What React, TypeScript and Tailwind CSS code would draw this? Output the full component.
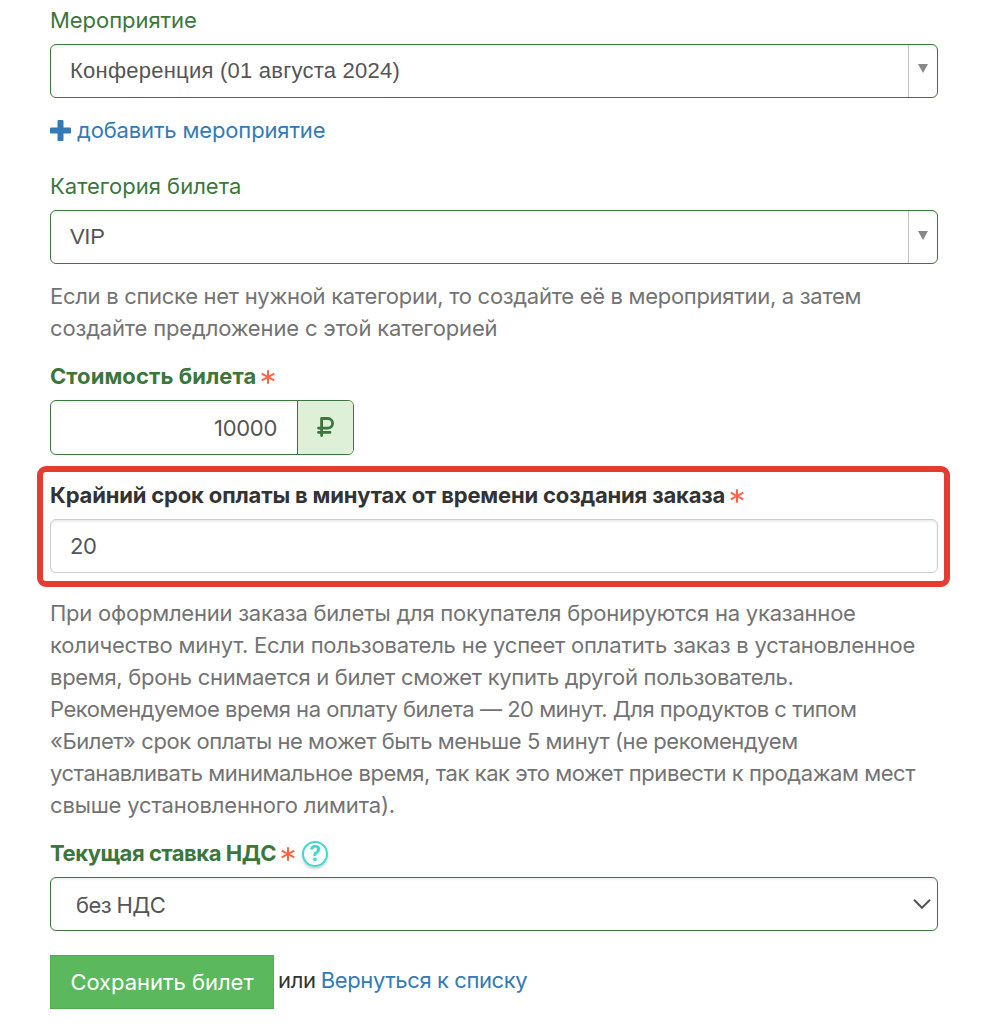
import type { ReactNode } from "react";

type Line = { text: string; className: string };

const CATEGORY_HELP: Line[] = [
  { text: "Если в списке нет нужной категории, то создайте её в мероприятии, а затем", className: "tracking-[-0.3px]" },
  { text: "создайте предложение с этой категорией", className: "tracking-[-0.16px]" },
];

const DEADLINE_HELP: Line[] = [
  { text: "При оформлении заказа билеты для покупателя бронируются на указанное", className: "tracking-[-0.23px]" },
  { text: "количество минут. Если пользователь не успеет оплатить заказ в установленное", className: "tracking-[-0.21px]" },
  { text: "время, бронь снимается и билет сможет купить другой пользователь.", className: "tracking-[-0.3px]" },
  { text: "Рекомендуемое время на оплату билета — 20 минут. Для продуктов с типом", className: "tracking-[-0.49px]" },
  { text: "«Билет» срок оплаты не может быть меньше 5 минут (не рекомендуем", className: "tracking-[-0.44px]" },
  { text: "устанавливать минимальное время, так как это может привести к продажам мест", className: "tracking-[-0.44px]" },
  { text: "свыше установленного лимита).", className: "tracking-[-0.17px]" },
];

function HelpText({ lines, className }: { lines: Line[]; className: string }) {
  return (
    <p className={`whitespace-nowrap text-[#737373] ${className}`}>
      {lines.map((line) => (
        <span key={line.text} className={`block ${line.className}`}>
          {line.text}
        </span>
      ))}
    </p>
  );
}

function Required({ className = "" }: { className?: string }) {
  return (
    <svg
      viewBox="0 0 14 14"
      aria-hidden="true"
      className={`h-3.5 w-3.5 shrink-0 fill-none stroke-[#ff6347] ${className}`}
      strokeWidth="2"
    >
      <path d="M7 0.3v13.4M0.7 3.7l12.6 6.6M13.3 3.7L0.7 10.3" />
    </svg>
  );
}

// Select2-style control: value on the left, arrow cell behind a divider.
function SearchSelect({ children, arrowClassName }: { children: ReactNode; arrowClassName: string }) {
  return (
    <button
      type="button"
      className="mt-2 flex h-[54px] w-full rounded-md border border-[#3c763d] bg-white text-left text-[#555] shadow-[inset_0_2px_2px_rgba(0,0,0,0.06)]"
    >
      <span className="flex h-full flex-1 items-center pl-[19px]">{children}</span>
      <span className={`flex h-full w-[29px] justify-center border-l border-[#c4c4c4] ${arrowClassName}`}>
        <svg viewBox="0 0 10 9" className="h-[9px] w-2.5 fill-[#888]" aria-hidden="true">
          <path d="M0 0h10L5 9z" />
        </svg>
      </span>
    </button>
  );
}

export default function App() {
  return (
    <form className="h-[1031px] w-[1004px] overflow-hidden bg-white pt-1 pr-[66px] pl-[50px] font-['Inter','Liberation_Sans',sans-serif] text-[22px] leading-8 text-[#333]">
      <label className="block h-8 tracking-[-0.05px] text-[#3c763d]">Мероприятие</label>
      <SearchSelect arrowClassName="pt-[19px]">
        <span className="font-['Liberation_Sans',Arial,sans-serif] tracking-[0.24px]">
          Конференция (01 августа 2024)
        </span>
      </SearchSelect>
      <a href="#" className="mt-4 flex h-8 items-center text-[#337ab7]">
        <svg viewBox="0 0 21 21" className="mr-1.5 h-[21px] w-[21px] fill-[#337ab7]" aria-hidden="true">
          <path d="M8.5 0h4a1 1 0 0 1 1 1v6.5H20a1 1 0 0 1 1 1v4a1 1 0 0 1-1 1h-6.500V20a1 1 0 0 1-1 1h-4a1 1 0 0 1-1-1v-6.500H1a1 1 0 0 1-1-1V8.500a1 1 0 0 1 1-1h6.500V1a1 1 0 0 1 1-1z" />
        </svg>
        <span className="tracking-[-0.15px]">добавить мероприятие</span>
      </a>

      <label className="mt-6 block h-8 text-[#3c763d]">Категория билета</label>
      <SearchSelect arrowClassName="pt-5">
        <span className="font-['Liberation_Sans',Arial,sans-serif] tracking-[-0.3px]">VIP</span>
      </SearchSelect>
      <HelpText lines={CATEGORY_HELP} className="mt-4" />

      <label className="mt-4 flex h-8 items-center font-bold text-[#3c763d]">
        <span className="tracking-[0.07px]">Стоимость билета</span>
        <Required className="mt-0.5 ml-[5px]" />
      </label>
      <div className="mt-2 flex h-[55px] w-[304px] overflow-hidden rounded-md border border-[#3c763d]">
        <input
          defaultValue="10000"
          className="w-[246px] pr-5 text-right tracking-[-0.3px] text-[#555] shadow-[inset_0_2px_2px_rgba(0,0,0,0.06)] outline-none"
        />
        <span className="flex flex-1 items-center justify-center border-l border-[#3c763d] bg-[#dff0d8]">
          <svg
            viewBox="0 0 17 20"
            className="mb-0.5 h-5 w-[17px] fill-none stroke-[#3c763d]"
            strokeWidth="2.8"
            strokeLinecap="round"
            strokeLinejoin="round"
            aria-hidden="true"
          >
            <path d="M4.600 18.500V1.500h6.200a4.700 4.700 0 0 1 0 9.600H1.500M1.500 15.400h11.500" />
          </svg>
        </span>
      </div>

      <section className="-mx-[13px] mt-[11px] h-[121px] w-[913px] rounded-[9px] border-6 border-[#e63b30] px-[7px] pt-[7px]">
        <label className="flex h-8 items-center font-bold">
          <span className="whitespace-nowrap tracking-[-0.17px]">
            Крайний срок оплаты в минутах от времени создания заказа
          </span>
          <Required className="mt-0.5 ml-[5px]" />
        </label>
        <input
          defaultValue="20"
          className="mt-2 block h-[54px] w-[888px] rounded-md border border-[#ccc] px-[19px] tracking-[-0.3px] text-[#555] shadow-[inset_0_2px_2px_rgba(0,0,0,0.075)] outline-none"
        />
      </section>
      <HelpText lines={DEADLINE_HELP} className="mt-2.5" />

      <label className="mt-4 flex h-8 items-center font-bold text-[#3c763d]">
        <span className="tracking-[-0.47px]">Текущая ставка НДС</span>
        <Required className="mt-0.5 ml-[5px]" />
        <span className="mt-px ml-[7px] flex h-[26px] w-[26px] items-center justify-center rounded-full border-2 border-[#40d9d0] text-[21px] text-[#40d9d0] shadow-[0_2px_3px_rgba(0,0,0,0.2)]">
          ?
        </span>
      </label>
      <button
        type="button"
        className="mt-2 flex h-[54px] w-full items-center justify-between rounded-md border border-[#3c763d] bg-white pr-[6px] pl-[25px] text-[#555] shadow-[inset_0_2px_2px_rgba(0,0,0,0.06)]"
      >
        <span className="pt-0.5 tracking-[-0.6px]">без НДС</span>
        <svg viewBox="0 0 18 10" className="h-2.5 w-[18px] fill-none stroke-[#555]" strokeWidth="2" aria-hidden="true">
          <path d="M1 0.800l8 8 8-8" />
        </svg>
      </button>

      <div className="mt-6 flex">
        <button type="submit" className="h-[54px] w-[224px] border border-[#4cae4c] bg-[#5cb85c] text-white">
          <span className="tracking-[-0.03px]">Сохранить билет</span>
        </button>
        <p className="ml-1 flex h-[50px] items-center gap-[5px]">
          <span className="tracking-[-0.3px]">или</span>
          <a href="#" className="tracking-[-0.4px] text-[#337ab7]">
            Вернуться к списку
          </a>
        </p>
      </div>
    </form>
  );
}
